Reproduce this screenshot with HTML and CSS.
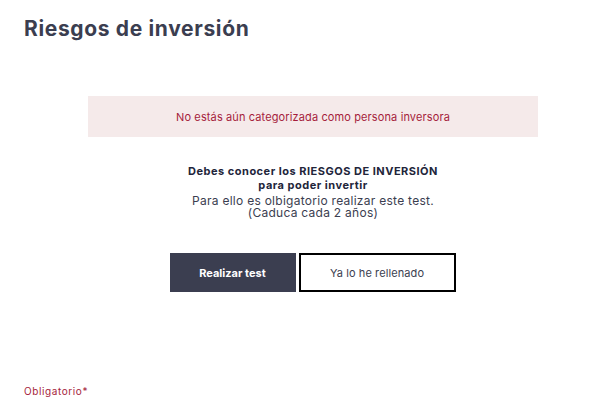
FILE: index.html
```html
<!DOCTYPE html>
<html lang="es">
<head>
<meta charset="utf-8">
<link rel="stylesheet" href="styles.css">
</head>
<body>
<div class="page">
  <h1 class="title">Riesgos de inversión</h1>
  <div class="panel">
    <div class="alert">No estás aún categorizada como persona inversora</div>
    <div class="info">
      <p class="info-strong">Debes conocer los RIESGOS DE INVERSIÓN<br>para poder invertir</p>
      <p class="info-text">Para ello es olbigatorio realizar este test.<br>(Caduca cada 2 años)</p>
    </div>
    <div class="actions">
      <button class="btn btn-primary">Realizar test</button>
      <button class="btn btn-outline">Ya lo he rellenado</button>
    </div>
  </div>
  <div class="required">Obligatorio*</div>
</div>
</body>
</html>
```

FILE: styles.css
```css
html, body {
  margin: 0;
  padding: 0;
  background: #ffffff;
}
body {
  font-family: "Inter", "Noto Sans", sans-serif;
  width: 600px;
  height: 412px;
  overflow: hidden;
}
.page {
  padding: 14px 24px 0 24px;
}
.title {
  margin: 0;
  font-size: 21px;
  line-height: 30px;
  font-weight: 700;
  color: #3b3e50;
  letter-spacing: 0.65px;
}
.panel {
  width: 450px;
  margin: 52px 0 0 64px;
  display: flex;
  flex-direction: column;
  align-items: center;
}
.alert {
  width: 100%;
  height: 41px;
  background: #f5eaea;
  color: #a51d3c;
  font-size: 11px;
  letter-spacing: 0.12px;
  display: flex;
  align-items: center;
  justify-content: center;
}
.info {
  margin-top: 27px;
  text-align: center;
}
.info p {
  margin: 0;
}
.info-strong {
  font-size: 11px;
  line-height: 14px;
  font-weight: 700;
  color: #22253a;
  letter-spacing: 0.5px;
}
.info-text {
  margin-top: 3px !important;
  font-size: 12px;
  line-height: 12px;
  color: #3b3e50;
  letter-spacing: 0.27px;
}
.actions {
  margin-top: 34px;
  display: flex;
  gap: 3px;
  margin-left: -1px;
}
.btn {
  height: 39px;
  font-family: inherit;
  font-size: 11px;
  border: 0;
  padding: 0;
  cursor: pointer;
}
.btn-primary {
  width: 126px;
  background: #3b3e50;
  color: #ffffff;
  font-weight: 700;
}
.btn-outline {
  width: 157px;
  background: #ffffff;
  border: 2px solid #000000;
  color: #3b3e50;
  letter-spacing: 0.1px;
}
.required {
  margin-top: 93px;
  font-size: 10px;
  color: #a51d3c;
  letter-spacing: 0.6px;
}
```
